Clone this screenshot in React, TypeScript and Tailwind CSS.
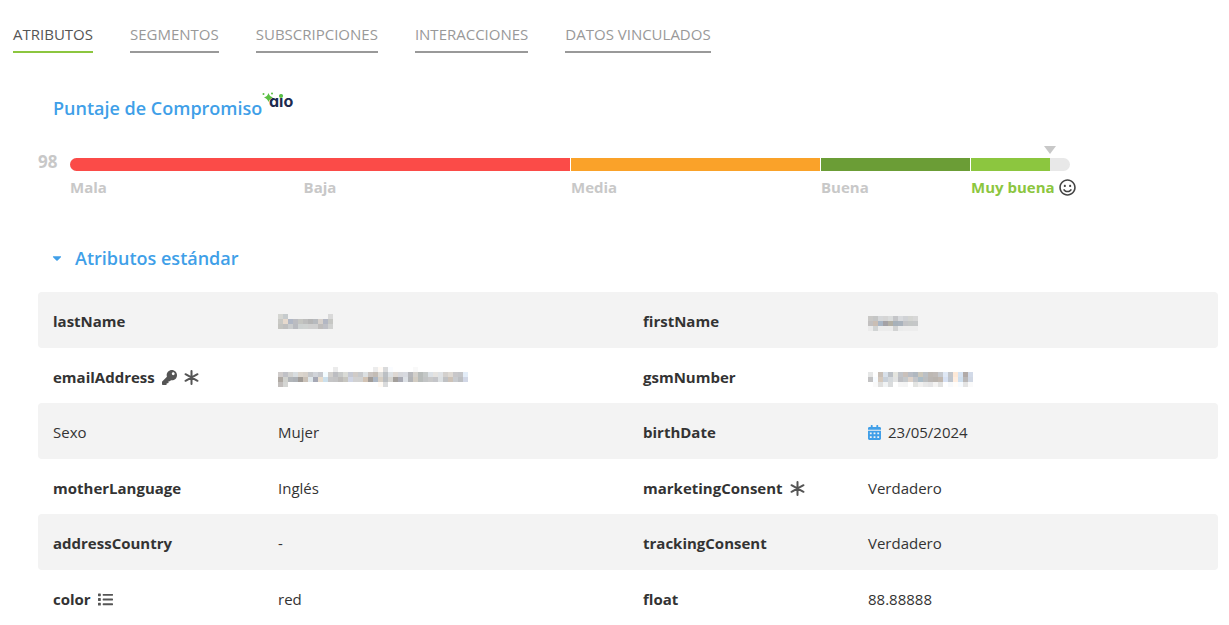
import clsx from "clsx";
import type { ReactNode } from "react";
import { useState } from "react";
import {
  FaCalendarAlt,
  FaCaretDown,
  FaKey,
  FaList,
  FaRegSmile,
} from "react-icons/fa";

const TABS = [
  "ATRIBUTOS",
  "SEGMENTOS",
  "SUBSCRIPCIONES",
  "INTERACCIONES",
  "DATOS VINCULADOS",
];

// One entry per 5px line of a masked value, "-" leaves the cell empty.
const LAST_NAME = [
  "d5d6d2 c6cbcd - - - - - - - - d9d9d9",
  "c9c9c5 e6d9cd b0b7c5 bbbcc1 c4c5c1 bdbdbd b5b5b5 b7babe d6d0cb b3b7c3 c6c7c4",
  "c4c4c0 bfbfbf cacccd b9bbc0 cdd1d1 cfd2d1 cfcfcf cfcfcf bfbdbc bfc0c6 d0d1d0",
];
const FIRST_NAME = [
  "c9c8c6 c4c5c5 d5d7d9 d5d5d5 dadcdc c4c5c8 d8dadd d0d2d5 d4d5d2 d7d7d7",
  "c2c0c0 cabeb4 a9b6c5 a4a2a6 b3b0a5 a7b1ba aab3bd c3c4c7 c4c7c6 c5c7c8",
  "ebebeb d1d4d4 ececec ececec ececec d2d3d3 ebecec ededed ededed ededed",
];
const EMAIL = [
  "- - - - - - - - - - - ebebeb - - - - - - - ececec fffaf5 d9dadb fafcff - - - - f9f9f9 - - - - - - - - - -",
  "d0cccb c0c1c6 d2d2d0 d8dde0 dbd5cd d7d1ca c5c7ca d1d4d9 c7c9ce f4fcff d2d0cd bcbdc1 c8cac9 dadbd6 c6c9d3 d0cbc7 c7c9cc dce0e2 c9c3bf c3bcb5 dbdad7 bcc0c4 dce0e3 ded8d3 d6d7db d7d9df b6b7bb d3d0cb b8bcba c4c8c7 dce1e6 e5e3e0 dfe2e5 d3d0cd ded9d3 c8c7c9 c4c5c8 e3edf8",
  "afa9a3 d1d2ce b1b5b9 adb1b6 a19c97 cac1b7 dfe7eb a5a8b5 e7dccd cce0ec c5c5c6 c3c3c4 bcbab8 c7c6c0 d0d5e4 d1d1d2 d1d1d0 d1c2b3 a19c98 adb7c4 d6cec3 babdc0 d5d4d0 a39f9b a9aab4 dce0e5 b2b4b7 d2ccc2 b8bcba c2c4c5 c9c9c9 c4c5c9 dce0e2 bfc1c4 cdc2b7 c8cbcf bdbfc2 d1d7e6",
  "c2bebc d5d6d4 - - - - - - - - - - - - - - - - - - fffaf4 dadbdc - - - - - - - - - - - - - - - -",
];
const GSM = [
  "e5e6e6 fefefe c9c0b8 d8e0e9 bcc1c7 e4e4de c1c4c9 c9c0ba b9bdc5 b0b8c0 cbc7bb bbc0c5 bdb8b3 bfbab7 c6c9ce dfe8f5 c3c6cb fee9d7 d6e3f2 b1aaa7 d2dae8",
  "c3c3c4 f7fbff d5c9bd c8d0d9 d5d9dc e2e3e3 bebfc3 c4c8cb ded3ca c4c6ca acbdc7 bbbec0 bab6b3 b9b4af c1b8b0 d7e1f3 c0c6ce ffeee0 cfdfee bab8b8 d0d7e3",
  "- f9f9f9 dfdfde f1f3f4 dadcdd - f5f5f5 f4f4f4 - e3e4e2 f1f0ef e8e8e8 e4e4e5 f4f3f2 e2e2e1 - f7f9fb fffdfa f7fbff e4e4e4 fafafa",
];

type Row = { name: ReactNode; value: ReactNode };

const ROWS: [Row, Row][] = [
  [
    { name: "lastName", value: <Masked lines={LAST_NAME} /> },
    {
      name: "firstName",
      value: <Masked className="mt-[5px]" lines={FIRST_NAME} />,
    },
  ],
  [
    {
      name: (
        <>
          emailAddress
          <FaKey className="size-[15px] text-[#555]" />
          <Asterisk />
        </>
      ),
      value: <Masked lines={EMAIL} />,
    },
    { name: "gsmNumber", value: <Masked className="mt-[5px]" lines={GSM} /> },
  ],
  [
    { name: <span className="font-normal">Sexo</span>, value: "Mujer" },
    {
      name: "birthDate",
      value: (
        <>
          <FaCalendarAlt className="h-[15px] w-[13px] text-[#409fe8]" />
          23/05/2024
        </>
      ),
    },
  ],
  [
    { name: "motherLanguage", value: "Inglés" },
    {
      name: (
        <>
          marketingConsent
          <Asterisk />
        </>
      ),
      value: "Verdadero",
    },
  ],
  [
    { name: "addressCountry", value: "-" },
    { name: "trackingConsent", value: "Verdadero" },
  ],
  [
    {
      name: (
        <>
          color
          <FaList className="size-[15px] text-[#555]" />
        </>
      ),
      value: "red",
    },
    { name: "float", value: "88.88888" },
  ],
];

export default function App() {
  const [tab, setTab] = useState("ATRIBUTOS");

  return (
    <div className="bg-white pt-6 font-['Open_Sans',sans-serif] text-[15px] text-[#333]">
      <nav className="flex flex-wrap gap-x-[37px] px-[13px]">
        {TABS.map((t) => (
          <button
            className={clsx(
              "cursor-pointer border-b-2 pb-[7px] leading-5",
              t === tab
                ? "border-[#8cc63f] text-[#555]"
                : "border-[#999] text-[#999]",
            )}
            key={t}
            onClick={() => setTab(t)}
            type="button"
          >
            {t}
          </button>
        ))}
      </nav>

      <main className="pr-[11px] pl-[38px]">
        <h2 className="mt-[43px] flex h-6 pl-[15px] text-lg leading-6 font-semibold text-[#409fe8]">
          Puntaje de Compromiso
          <AioLogo />
        </h2>
        <Score value={98} />

        <details className="mt-12" open>
          <summary className="flex cursor-pointer items-center gap-[11px] pl-[12px] text-lg leading-6 font-semibold text-[#409fe8]">
            <FaCaretDown className="size-[14px]" />
            Atributos estándar
          </summary>
          <AttributeTable />
        </details>
      </main>
    </div>
  );
}

function Score({ value }: { value: number }) {
  return (
    <section className="mt-[26px] flex gap-3 pr-[148px] font-bold text-[#c8c8c8]">
      <span className="mt-1 w-5 text-[17px] leading-6">{value}</span>
      <div className="min-w-0 grow pb-px">
        <div className="h-3">
          <svg
            className="h-2 w-3 -translate-x-1/2"
            style={{ marginLeft: `${value}%` }}
            viewBox="0 0 12 8"
          >
            <path d="M0 0h12L6 8z" fill="#c8c8c8" />
          </svg>
        </div>
        <div className="h-[13px] overflow-hidden rounded-full bg-[#e8e8e8]">
          <div
            className="grid h-full grid-cols-[500fr_250fr_150fr_80fr]"
            style={{ width: `${value}%` }}
          >
            <div className="bg-[#fb4b48]" />
            <div className="border-l border-white bg-[#faa229]" />
            <div className="border-l border-white bg-[#6b9d36]" />
            <div className="border-l border-white bg-[#8cc63f]" />
          </div>
        </div>
        <div className="mt-[6px] grid grid-cols-[50fr_25fr_15fr_10fr] leading-5">
          <div className="grid grid-cols-[1fr_auto_1fr]">
            <span>Mala</span>
            <span>Baja</span>
          </div>
          <span className="pl-px">Media</span>
          <span className="pl-px">Buena</span>
          <span className="flex w-0 items-center gap-1 pl-px whitespace-nowrap text-[#8cc63f]">
            Muy buena
            <FaRegSmile className="size-[17px] shrink-0 text-[#444]" />
          </span>
        </div>
      </div>
    </section>
  );
}

function AttributeTable() {
  return (
    <table className="mt-[22px] w-full table-fixed border-separate border-spacing-0 text-left">
      <colgroup>
        <col className="w-[225px]" />
        <col />
        <col className="w-[225px]" />
        <col />
      </colgroup>
      <tbody>
        {ROWS.map((pair, i) => (
          <tr
            className="h-14 align-top even:h-[55px] odd:bg-[#f3f3f3] [&>:first-child]:rounded-l [&>:last-child]:rounded-r"
            key={i}
          >
            {pair.map((row, j) => (
              <Attribute key={j} {...row} />
            ))}
          </tr>
        ))}
      </tbody>
    </table>
  );
}

function Attribute({ name, value }: Row) {
  return (
    <>
      <th className="pt-[19px] pl-[15px] font-bold" scope="row">
        <div className="flex items-center gap-[7px] leading-5">{name}</div>
      </th>
      <td className="pt-[19px] pl-[15px]">
        <div className="flex min-h-5 items-center gap-[7px] leading-5">
          {value}
        </div>
      </td>
    </>
  );
}

function Masked({ lines, className }: { lines: string[]; className?: string }) {
  const cells = lines.map((l) => l.split(" "));
  const width = cells[0].length * 5;
  const height = cells.length * 5;
  return (
    <svg
      aria-hidden="true"
      className={className}
      height={height}
      shapeRendering="crispEdges"
      viewBox={`0 0 ${width} ${height}`}
      width={width}
    >
      {cells.map((line, y) =>
        line.map((c, x) =>
          c === "-" ? null : (
            <rect
              fill={`#${c}`}
              height={5}
              key={`${x}-${y}`}
              width={5}
              x={x * 5}
              y={y * 5}
            />
          ),
        ),
      )}
    </svg>
  );
}

function Asterisk() {
  return (
    <svg
      className="size-[15px]"
      fill="none"
      stroke="#555"
      strokeLinecap="round"
      strokeWidth="2"
      viewBox="0 0 15 15"
    >
      <path d="M7.500 1v13M1.500 4.200l12 6.600M13.500 4.200l-12 6.600" />
    </svg>
  );
}

function AioLogo() {
  return (
    <svg className="-mt-[7px] h-6 w-9" viewBox="0 -3 36 24">
      <text
        fill="#1d2b4f"
        fontFamily="Inter, sans-serif"
        fontSize="16"
        fontWeight="700"
        style={{ fontFeatureSettings: "'cv11'" }}
        x="7"
        y="15"
      >
        aio
      </text>
      <circle cx="19" cy="4" fill="#5bc043" r="2" />
      <path
        d="M6.500 1Q7.500 4.500 11 5.500 7.500 6.500 6.500 10 5.500 6.500 2 5.500 5.500 4.500 6.500 1z"
        fill="#5bc043"
      />
      <circle cx="1.500" cy="2" fill="#5bc043" r="1" />
      <circle cx="10" cy="1.500" fill="#5bc043" r="1" />
    </svg>
  );
}
